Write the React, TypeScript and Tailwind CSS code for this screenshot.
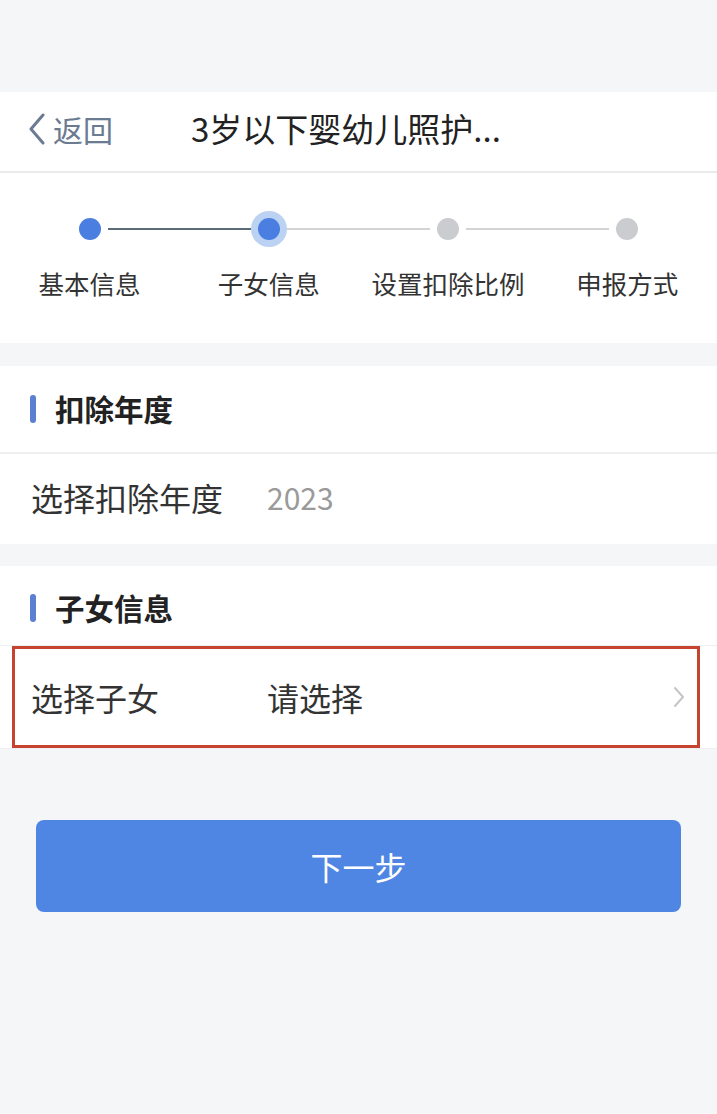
import React from "react";

const font = { fontFamily: '"Noto Sans CJK SC", "Noto Sans", sans-serif' };

function Step({ label, state, left, right }: { label: string; state: "done" | "current" | "todo"; left: string; right: string }) {
  return (
    <div className="flex flex-col items-center">
      <div className="flex h-[36px] w-full items-center">
        <div className={`h-[2px] flex-1 ${left}`} />
        {state === "current" ? (
          <div className="flex h-[36px] w-[36px] items-center justify-center rounded-full bg-[#bcd2f2]">
            <div className="h-[22px] w-[22px] rounded-full bg-[#4a7ee0]" />
          </div>
        ) : (
          <div className={`mx-[7px] h-[22px] w-[22px] rounded-full ${state === "done" ? "bg-[#4a7ee0]" : "bg-[#cbcccf]"}`} />
        )}
        <div className={`h-[2px] flex-1 ${right}`} />
      </div>
      <div className="mt-[19px] text-[25.5px] leading-[34px] text-[#333333] whitespace-nowrap">{label}</div>
    </div>
  );
}

export default function App() {
  return (
    <div className="min-h-[1114px] w-[717px] bg-[#f5f6f8]" style={font}>
      <div className="h-[92px]" />
      {/* Header */}
      <div className="flex h-[81px] items-center border-b-2 border-[#e9eaec] bg-white pb-[6px]">
        <div className="ml-[27px] flex items-center text-[#6b7b92]">
          <svg width="20" height="32" viewBox="0 0 20 32" fill="none">
            <path d="M16 2 L4 16 L16 30" stroke="#6b7b92" strokeWidth="3" strokeLinecap="round" strokeLinejoin="round" />
          </svg>
          <span className="ml-[6px] text-[30px] leading-none">返回</span>
        </div>
        <div className="ml-[78px] text-[33px] leading-none text-[#222222]">3岁以下婴幼儿照护...</div>
      </div>
      {/* Steps */}
      <div className="grid h-[170px] grid-cols-4 bg-white pt-[38px]">
        <Step label="基本信息" state="done" left="bg-transparent" right="bg-[#5c6b7a]" />
        <Step label="子女信息" state="current" left="bg-[#5c6b7a]" right="bg-[#d3d4d6]" />
        <Step label="设置扣除比例" state="todo" left="bg-[#d3d4d6]" right="bg-[#d3d4d6]" />
        <Step label="申报方式" state="todo" left="bg-[#d3d4d6]" right="bg-transparent" />
      </div>
      <div className="h-[23px]" />
      {/* Section 1 */}
      <div className="bg-white">
        <div className="flex h-[88px] items-center border-b-2 border-[#eeeff1] pl-[30px]">
          <div className="h-[28px] w-[6px] rounded-full bg-[#5b80d0]" />
          <span className="ml-[19px] text-[29.5px] font-bold leading-none text-[#222222]">扣除年度</span>
        </div>
        <div className="flex h-[90px] items-center pb-[4px] pl-[31px]">
          <span className="w-[236px] text-[32px] leading-none text-[#333333]">选择扣除年度</span>
          <span className="text-[30px] leading-none text-[#9a9a9a]">2023</span>
        </div>
      </div>
      <div className="h-[22px]" />
      {/* Section 2 */}
      <div className="bg-white">
        <div className="flex h-[79px] items-center pl-[30px] pt-[5px]">
          <div className="h-[28px] w-[6px] rounded-full bg-[#5b80d0]" />
          <span className="ml-[19px] text-[29.5px] font-bold leading-none text-[#222222]">子女信息</span>
        </div>
        <div className="border-y border-[#eeeff1]">
          <div className="ml-[12px] mr-[17px] flex h-[102px] items-center border-[3px] border-[#c5432f] pl-[16px] pr-[12px]">
            <span className="w-[236px] text-[32px] leading-none text-[#333333]">选择子女</span>
            <span className="flex-1 text-[32px] leading-none text-[#333333]">请选择</span>
            <svg width="12" height="22" viewBox="0 0 12 22" fill="none">
              <path d="M2 2 L10 11 L2 20" stroke="#c4c5c8" strokeWidth="2" strokeLinecap="round" strokeLinejoin="round" />
            </svg>
          </div>
        </div>
      </div>
      {/* Button */}
      <div className="px-[36px] pt-[71px]">
        <div className="flex h-[92px] items-center justify-center rounded-[8px] bg-[#4f85e3]">
          <span className="text-[32px] leading-none text-white">下一步</span>
        </div>
      </div>
    </div>
  );
}
